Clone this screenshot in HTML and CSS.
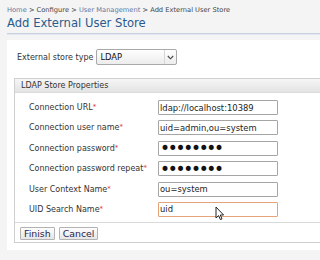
FILE: index.html
```html
<!DOCTYPE html>
<html lang="en">
<head>
    <meta charset="UTF-8">
    <title>Add External User Store</title>
    <link rel="stylesheet" href="styles.css">
</head>
<body>
    <div class="page">
        <div class="breadcrumb">
            <a href="#" class="crumb-link">Home</a> &gt;
            <span>Configure</span> &gt;
            <a href="#" class="crumb-link">User Management</a> &gt;
            <span>Add External User Store</span>
        </div>
        <h2 class="title">Add External User Store</h2>

        <div class="panel">
            <div class="store-type">
                <label for="storeType">External store type</label>
                <div class="select-wrap">
                    <select id="storeType">
                        <option>LDAP</option>
                    </select>
                    <span class="select-arrow">
                        <svg width="7" height="5" viewBox="0 0 7 5">
                            <path d="M0.8 1 L3.5 3.8 L6.2 1" fill="none" stroke="#444" stroke-width="1.1"/>
                        </svg>
                    </span>
                </div>
            </div>

            <form class="props">
                <div class="props-header">LDAP Store Properties</div>
                <div class="props-body">
                    <label for="url">Connection URL<span class="req">*</span></label>
                    <input type="text" id="url" value="ldap://localhost:10389">

                    <label for="user">Connection user name<span class="req">*</span></label>
                    <input type="text" id="user" value="uid=admin,ou=system">

                    <label for="pass">Connection password<span class="req">*</span></label>
                    <input type="password" id="pass" class="secret" value="12345678">

                    <label for="pass2">Connection password repeat<span class="req">*</span></label>
                    <input type="password" id="pass2" class="secret" value="12345678">

                    <label for="ctx">User Context Name<span class="req">*</span></label>
                    <input type="text" id="ctx" value="ou=system">

                    <label for="uid">UID Search Name<span class="req">*</span></label>
                    <div class="cursor-wrap">
                        <input type="text" id="uid" class="active" value="uid">
                        <svg class="cursor" width="10" height="15" viewBox="0 0 10 15">
                            <path d="M1 1 L1 12 L3.6 9.6 L5.4 13.6 L7 12.9 L5.3 9 L8.6 9 Z" fill="#fff" stroke="#222" stroke-width="1" stroke-linejoin="round"/>
                        </svg>
                    </div>
                </div>
                <div class="buttons">
                    <button type="submit" class="button">Finish</button>
                    <button type="button" class="button">Cancel</button>
                </div>
            </form>
        </div>
    </div>
</body>
</html>
```

FILE: styles.css
```css
* {
    box-sizing: border-box;
    margin: 0;
    padding: 0;
}

body {
    font-family: 'DejaVu Sans', Verdana, sans-serif;
    background: #f4f4f4;
    color: #333;
    overflow: hidden;
}

.page {
    width: 380px;
    padding-left: 7px;
}

.breadcrumb {
    font-size: 6.7px;
    color: #444;
    padding-top: 6px;
    height: 16px;
}

.crumb-link {
    color: #5a78a6;
    text-decoration: none;
}

.title {
    font-size: 11.6px;
    font-weight: normal;
    color: #2b5b8e;
    height: 18px;
    border-bottom: 1px solid #c9d0e2;
    box-shadow: 0 1px 0 #e2e6ef;
}

.panel {
    margin-top: 6px;
    background: #fff;
    padding: 9px 0 7px 7px;
}

.store-type {
    display: flex;
    align-items: center;
    font-size: 8px;
    padding-left: 3px;
    height: 16px;
}

.store-type label {
    margin-right: 3px;
}

.select-wrap {
    position: relative;
    width: 81px;
    height: 16px;
}

.select-wrap select {
    appearance: none;
    width: 100%;
    height: 100%;
    border: 1px solid #a9a9a9;
    border-radius: 2px;
    background: linear-gradient(#ffffff, #ececec);
    font-family: inherit;
    font-size: 8.4px;
    color: #111;
    padding-left: 3px;
}

.select-arrow {
    position: absolute;
    right: 1px;
    top: 1px;
    bottom: 1px;
    width: 12px;
    border-left: 1px solid #d6d6d6;
    display: flex;
    align-items: center;
    justify-content: center;
    pointer-events: none;
}

.props {
    margin-top: 13px;
    border: 1px solid #cfcfcf;
    border-right: none;
}

.props-header {
    height: 14px;
    font-size: 8px;
    color: #333;
    padding: 2px 0 0 6px;
    background: linear-gradient(#f6f6f6, #e3e3e3);
    border-bottom: 1px solid #dcdcdc;
}

.props-body {
    display: grid;
    grid-template-columns: 129px 120px;
    row-gap: 5.4px;
    align-items: center;
    padding: 7px 0 5px 14px;
    border-bottom: 1px solid #dadada;
    font-size: 8px;
}

.req {
    color: #e2323e;
    font-size: 7px;
    vertical-align: 1px;
}

.props-body input {
    height: 15px;
    width: 120px;
    border: 1px solid #a5a5a5;
    border-radius: 1px;
    font-family: inherit;
    font-size: 8.4px;
    color: #222;
    padding-left: 1px;
}

.props-body input.secret {
    font-size: 17px;
    letter-spacing: -2.3px;
    line-height: 13px;
    padding: 0 0 0 1px;
    color: #111;
}

.props-body input.active {
    border-color: #e5a37b;
    outline: none;
}

.cursor-wrap {
    position: relative;
}

.cursor {
    position: absolute;
    left: 57px;
    top: 4px;
}

.buttons {
    display: flex;
    gap: 4px;
    padding: 4px 0 2px 5px;
}

.button {
    font-family: inherit;
    font-size: 9.4px;
    color: #2a2550;
    padding: 0 3px;
    height: 13px;
    line-height: 11px;
    border: 1px solid #b3b3b3;
    border-radius: 1px;
    background: linear-gradient(#fdfdfd, #e6e6e6);
}
```
